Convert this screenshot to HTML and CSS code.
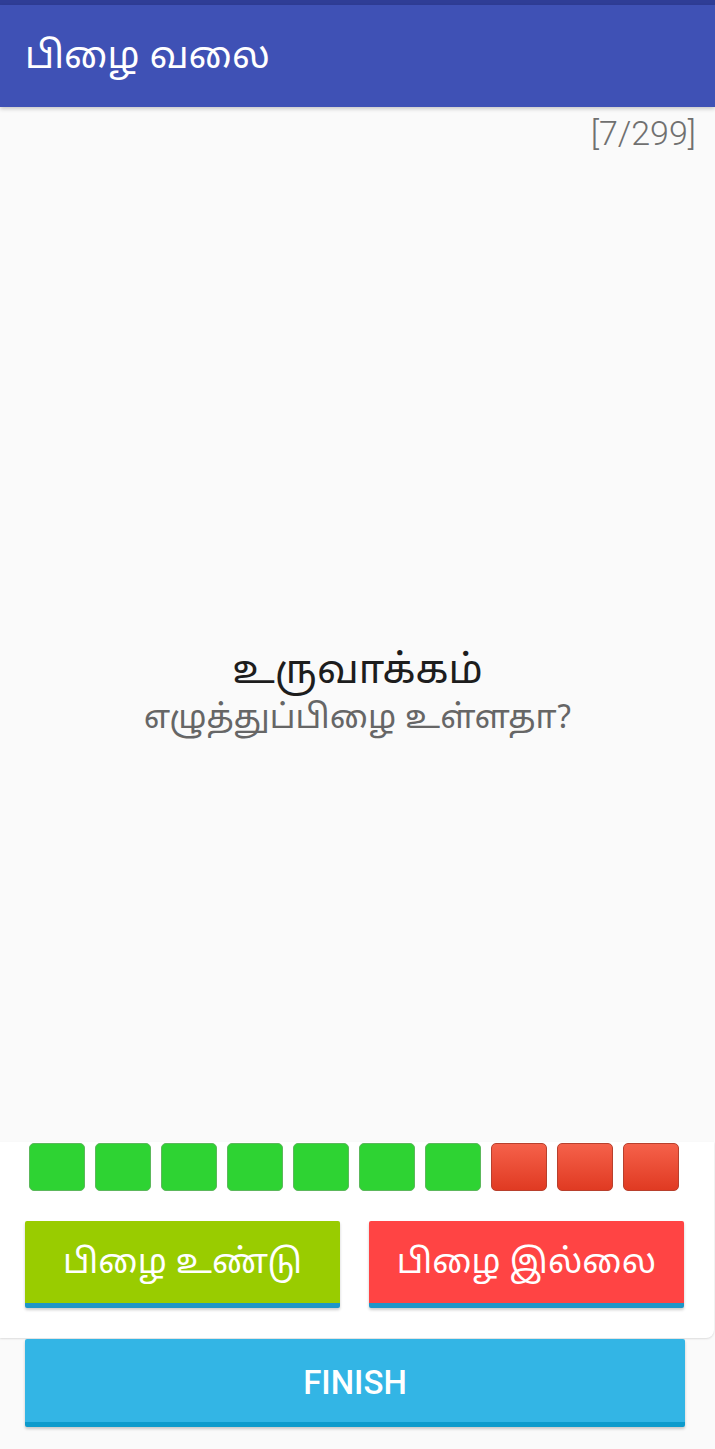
FILE: index.html
```html
<!DOCTYPE html>
<html lang="ta">
<head>
<meta charset="utf-8">
<link rel="stylesheet" href="styles.css">
</head>
<body>
<div class="status"></div>
<header class="appbar"><h1 class="title">பிழை வலை</h1></header>
<main class="content">
  <div class="counter">[7/299]</div>
  <div class="question">
    <div class="word">உருவாக்கம்</div>
    <div class="prompt">எழுத்துப்பிழை உள்ளதா?</div>
  </div>
</main>
<section class="panel">
  <div class="squares">
    <span class="sq ok"></span><span class="sq ok"></span><span class="sq ok"></span><span class="sq ok"></span><span class="sq ok"></span><span class="sq ok"></span><span class="sq ok"></span><span class="sq bad"></span><span class="sq bad"></span><span class="sq bad"></span>
  </div>
  <div class="answers">
    <button class="btn btn-yes">பிழை உண்டு</button>
    <button class="btn btn-no">பிழை இல்லை</button>
  </div>
</section>
<div class="finish-wrap"><button class="btn btn-finish">FINISH</button></div>
</body>
</html>
```

FILE: styles.css
```css
* { box-sizing: border-box; }
html, body { margin: 0; padding: 0; }
body {
  width: 715px;
  height: 1449px;
  background: #fafafa;
  font-family: "Noto Sans Tamil", "Lohit Tamil", "Noto Sans", Roboto, sans-serif;
  display: flex;
  flex-direction: column;
  overflow: hidden;
}
.status { height: 5px; background: #2f3d96; }
.appbar {
  height: 102px;
  background: #3f51b5;
  display: flex;
  align-items: center;
  padding: 0 25px;
  box-shadow: 0 2px 4px rgba(0,0,0,0.2);
  position: relative;
  z-index: 1;
}
.title {
  margin: 0;
  color: #fff;
  font-size: 37.5px;
  font-weight: 400;
  padding-top: 4px;
}
.content {
  flex: 1;
  display: flex;
  flex-direction: column;
}
.counter {
  align-self: flex-end;
  margin: 7px 19px 0 0;
  font-family: Roboto, "Noto Sans", sans-serif;
  font-size: 34px;
  font-weight: 300;
  color: #707070;
  line-height: 38px;
}
.question {
  flex: 1;
  display: flex;
  flex-direction: column;
  align-items: center;
  justify-content: center;
  padding-top: 96px;
}
.word { font-size: 40px; color: #1d1d1d; line-height: 50px; }
.prompt { font-size: 33px; color: #666; line-height: 44px; }
.panel {
  background: #fff;
  border-radius: 0 0 8px 0;
  box-shadow: 0 1px 2px rgba(0,0,0,0.12);
  padding: 1px 0 30px 0;
  margin-right: 1px;
}
.squares {
  display: flex;
  gap: 10px;
  padding-left: 29px;
}
.sq {
  width: 56px;
  height: 48px;
  border-radius: 5px;
}
.sq.ok { background: #2ed333; border: 1px solid #5cb85c; }
.sq.bad { background: linear-gradient(#f5614a, #e03a22); border: 1px solid #b8402d; }
.answers {
  display: flex;
  justify-content: space-between;
  padding: 30px 30px 0 25px;
}
.btn {
  border: none;
  color: #fff;
  font-family: inherit;
  border-radius: 2px;
  box-shadow: 0 2px 3px rgba(0,0,0,0.2);
}
.btn-yes, .btn-no {
  width: 315px;
  height: 87px;
  font-size: 34px;
  border-bottom: 5px solid #1e96c8;
  padding: 4px 0 0 0;
}
.btn-yes { background: #99cc00; }
.btn-no { background: #ff4444; }
.finish-wrap { padding: 1px 30px 22px 25px; }
.btn-finish {
  width: 660px;
  height: 88px;
  background: #33b5e5;
  border-bottom: 5px solid #0e9bcc;
  font-family: Roboto, "Noto Sans", sans-serif;
  font-size: 33px;
  font-weight: 500;
  padding: 4px 0 0 0;
}
```
